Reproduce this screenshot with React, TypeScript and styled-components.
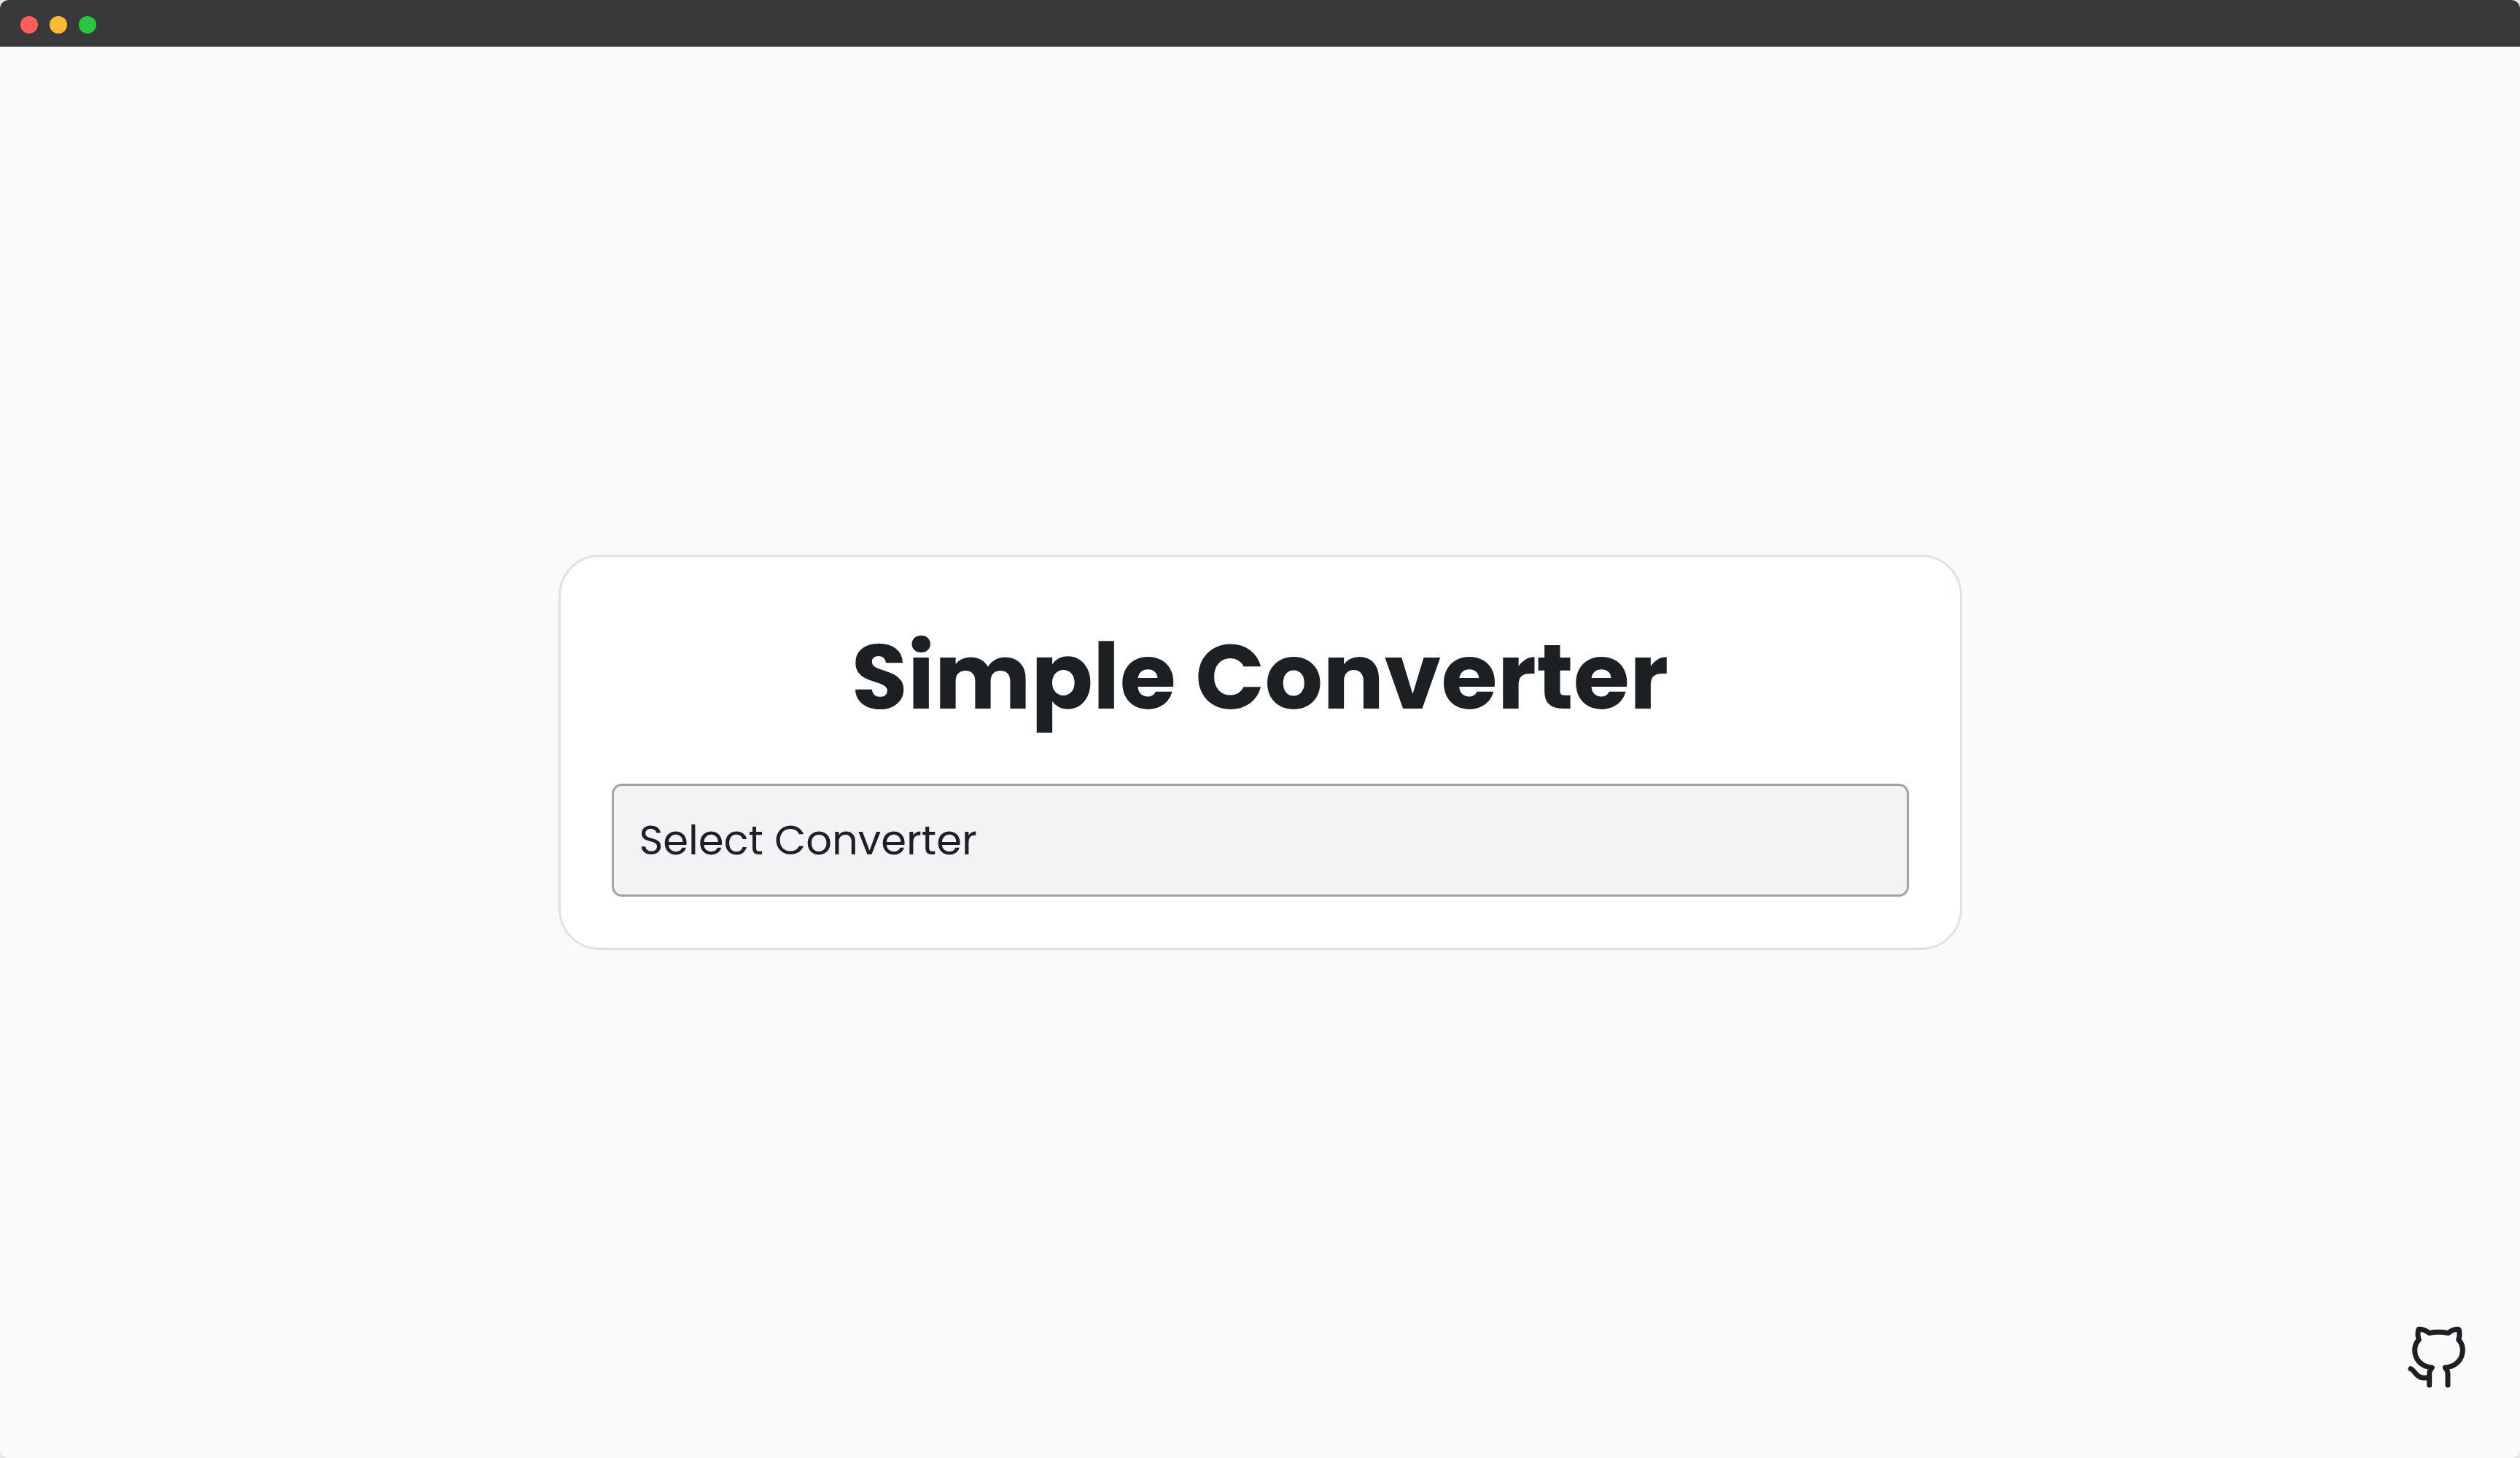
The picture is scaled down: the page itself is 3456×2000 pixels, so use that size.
import React from "react";
import styled, { createGlobalStyle } from "styled-components";

const GlobalStyle = createGlobalStyle`
  *, *::before, *::after { box-sizing: border-box; }
  body {
    margin: 0;
    background: #e4e6e6;
    color: #1d2023;
    font-family: Poppins, Inter, "Liberation Sans", sans-serif;
  }
`;

const Window = styled.div`
  display: flex;
  flex-direction: column;
  min-height: 100vh;
  background: #fafafa;
  border-radius: 12px;
  overflow: hidden;
`;

const TitleBar = styled.header`
  display: flex;
  align-items: center;
  gap: 16px;
  height: 64px;
  padding: 4px 28px 0;
  background: #38393b;
`;

const Dot = styled.span<{ $color: string }>`
  width: 24px;
  height: 24px;
  border-radius: 50%;
  background: ${(p) => p.$color};
`;

const Main = styled.main`
  flex: 1;
  display: flex;
  align-items: center;
  justify-content: center;
  padding: 72px;
`;

const Card = styled.section`
  display: flex;
  flex-direction: column;
  gap: 52px;
  width: 100%;
  max-width: 1925px;
  padding: 70px;
  background: #ffffff;
  border: 3px solid #d9e4e5;
  border-radius: 56px;
`;

const Title = styled.h1`
  margin: 0;
  font-size: 125px;
  font-weight: 700;
  line-height: 189px;
  text-align: center;
`;

const Select = styled.select`
  appearance: none;
  width: 100%;
  height: 155px;
  padding: 0 35px;
  background: #f3f3f5;
  border: 3px solid #a3a3a4;
  border-radius: 14px;
  color: inherit;
  font-family: inherit;
  font-size: 56px;
  cursor: pointer;
`;

const RepoLink = styled.a`
  position: fixed;
  right: 63px;
  bottom: 90px;
  display: flex;
  color: inherit;
`;

const GithubIcon = () => (
  <svg
    width="96"
    height="96"
    viewBox="51 72 288 288"
    fill="none"
    stroke="currentColor"
    strokeWidth="21"
    strokeLinecap="round"
    strokeLinejoin="round"
    aria-hidden="true"
  >
    <path d="M155 330V286C155 274 159 265 166 258C123 254 95 226 95 185C95 169 101 154 112 143C107 130 107 117 110 103Q111 99 116 100C130 101 143 107 155 116Q193 108 232 116C244 107 257 101 270 100Q275 99 277 103C280 117 280 130 275 143C286 154 292 169 292 185C292 226 263 254 220 258C227 265 231 274 231 286V330" />
    <path d="M78 263C94 267 100 300 131 300H155" />
  </svg>
);

export default function App() {
  return (
    <>
      <GlobalStyle />
      <Window>
        <TitleBar>
          <Dot $color="#ff5d55" />
          <Dot $color="#ffbc30" />
          <Dot $color="#27c840" />
        </TitleBar>
        <Main>
          <Card>
            <Title>Simple Converter</Title>
            <Select aria-label="Converter" defaultValue="">
              <option value="">Select Converter</option>
            </Select>
          </Card>
        </Main>
        <RepoLink href="#" aria-label="GitHub repository">
          <GithubIcon />
        </RepoLink>
      </Window>
    </>
  );
}
